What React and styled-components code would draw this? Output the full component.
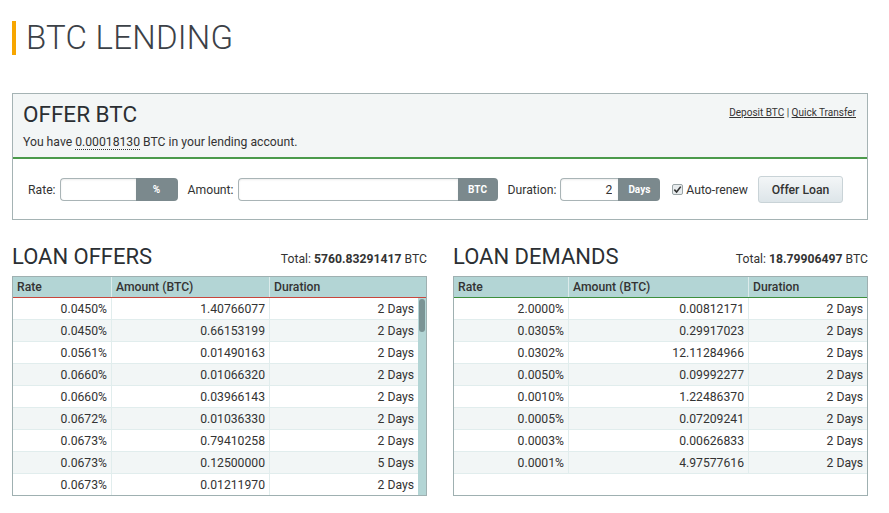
import styled, { createGlobalStyle } from 'styled-components';

const GlobalStyle = createGlobalStyle`
  body {
    margin: 0;
    background: #fff;
    font-family: Roboto, "Liberation Sans", Arial, sans-serif;
    color: #333;
  }
`;

const Page = styled.div`
  width: 889px;
  padding: 21px 21px 0 12px;
  box-sizing: border-box;
`;

const PageTitle = styled.h1`
  margin: 0 0 38px;
  height: 34px;
  line-height: 34px;
  border-left: 4px solid #f7a600;
  padding-left: 10px;
  font-size: 33px;
  font-weight: 300;
  color: #3c4147;
  letter-spacing: 0.25px;
`;

const OfferBox = styled.div`
  border: 1px solid #a5b3b4;
  width: 856px;
  box-sizing: border-box;
`;

const OfferHead = styled.div`
  background: #f3f6f6;
  border-bottom: 2px solid #4b9a4b;
  padding: 7px 11px 7px 10px;
  display: flex;
  justify-content: space-between;
  align-items: flex-start;
`;

const BoxTitle = styled.h2`
  margin: 0 0 7px;
  font-size: 22.5px;
  line-height: 26px;
  font-weight: 400;
  color: #2b2f33;
`;

const Note = styled.div`
  font-size: 12.2px;
  line-height: 16px;
  color: #333;
`;

const Dotted = styled.span`
  border-bottom: 1px dotted #333;
`;

const Links = styled.div`
  font-size: 10px;
  margin-top: 6px;
  color: #333;
  a {
    color: #333;
    text-decoration: underline;
  }
`;

const FormRow = styled.div`
  display: flex;
  align-items: center;
  padding: 17px 15px 16px 15px;
  font-size: 12.2px;
`;

const Label = styled.label`
  margin-right: 4px;
  color: #333;
`;

const Group = styled.div`
  display: flex;
  height: 23px;
  margin-right: ${(p) => p.$gap}px;
`;

const Input = styled.input`
  width: ${(p) => p.$w}px;
  box-sizing: border-box;
  border: 1px solid #a9b4b6;
  border-right: none;
  border-radius: 4px 0 0 4px;
  padding: 0 6px;
  font: 12.2px Roboto, sans-serif;
  color: #333;
  text-align: right;
  outline: none;
  box-shadow: inset 0 1px 2px rgba(0, 0, 0, 0.08);
`;

const Addon = styled.span`
  width: ${(p) => p.$w}px;
  background: #7b898d;
  color: #fff;
  font-size: 10px;
  font-weight: 700;
  border-radius: 0 4px 4px 0;
  display: flex;
  align-items: center;
  justify-content: center;
`;

const Check = styled.span`
  width: 11px;
  height: 11px;
  border: 1px solid #9aa4a6;
  border-radius: 2px;
  background: #e8ecee;
  box-sizing: border-box;
  margin: 0 3px 0 0;
  display: flex;
  align-items: center;
  justify-content: center;
`;

const CheckLabel = styled.span`
  margin-right: 10px;
`;

const Button = styled.button`
  width: 85px;
  height: 27px;
  border: 1px solid #c9d3d7;
  border-radius: 3px;
  background: linear-gradient(#f3f6f7, #dde5e9);
  font: 500 12.2px Roboto, sans-serif;
  color: #333;
`;

const Columns = styled.div`
  display: grid;
  grid-template-columns: 415px 415px;
  column-gap: 26px;
  margin-top: 20px;
`;

const SectionHead = styled.div`
  display: flex;
  justify-content: space-between;
  align-items: flex-end;
  height: 30px;
  margin-bottom: 6px;
`;

const SectionTitle = styled.h3`
  margin: 0;
  font-size: 22px;
  line-height: 26px;
  font-weight: 400;
  color: #2b2f33;
`;

const Total = styled.div`
  font-size: 12.2px;
  margin-bottom: 4px;
  b {
    font-weight: 700;
  }
`;

const TableWrap = styled.div`
  border: 1px solid #9fb0b1;
  height: 220px;
  box-sizing: border-box;
  overflow: hidden;
`;

const HeadRow = styled.div`
  display: grid;
  grid-template-columns: ${(p) => p.$cols};
  background: #b3d5d5;
  border-bottom: 1px solid ${(p) => p.$accent};
  height: 20px;
`;

const HeadCell = styled.div`
  font-size: 12.2px;
  font-weight: 500;
  color: #333;
  line-height: 20px;
  padding-left: 4px;
  border-left: 1px solid #dcebeb;
  &:first-child {
    border-left: none;
  }
`;

const BodyArea = styled.div`
  display: flex;
`;

const Rows = styled.div`
  flex: 1;
`;

const Row = styled.div`
  display: grid;
  grid-template-columns: ${(p) => p.$cols};
  height: 22px;
  box-sizing: border-box;
  background: ${(p) => (p.$alt ? '#f2f6f6' : '#fff')};
  border-bottom: 1px solid #e1eded;
`;

const Cell = styled.div`
  font-size: 12.2px;
  line-height: 21px;
  padding-top: 1px;
  text-align: right;
  padding-right: 4px;
  color: #333;
  border-left: 1px solid #e1eded;
  &:first-child {
    border-left: none;
  }
`;

const Track = styled.div`
  width: 8px;
  background: #b3d5d5;
  padding-top: 1px;
`;

const Thumb = styled.div`
  width: 6px;
  margin-left: 1px;
  height: 33px;
  border-radius: 3px;
  background: #7b9495;
`;

const offers = [
  ['0.0450%', '1.40766077', '2 Days'],
  ['0.0450%', '0.66153199', '2 Days'],
  ['0.0561%', '0.01490163', '2 Days'],
  ['0.0660%', '0.01066320', '2 Days'],
  ['0.0660%', '0.03966143', '2 Days'],
  ['0.0672%', '0.01036330', '2 Days'],
  ['0.0673%', '0.79410258', '2 Days'],
  ['0.0673%', '0.12500000', '5 Days'],
  ['0.0673%', '0.01211970', '2 Days'],
];

const demands = [
  ['2.0000%', '0.00812171', '2 Days'],
  ['0.0305%', '0.29917023', '2 Days'],
  ['0.0302%', '12.11284966', '2 Days'],
  ['0.0050%', '0.09992277', '2 Days'],
  ['0.0010%', '1.22486370', '2 Days'],
  ['0.0005%', '0.07209241', '2 Days'],
  ['0.0003%', '0.00626833', '2 Days'],
  ['0.0001%', '4.97577616', '2 Days'],
];

const OrderTable = ({ title, total, rows, cols, accent, scroll }) => (
  <div>
    <SectionHead>
      <SectionTitle>{title}</SectionTitle>
      <Total>
        Total: <b>{total}</b> BTC
      </Total>
    </SectionHead>
    <TableWrap>
      <HeadRow $cols={cols} $accent={accent}>
        <HeadCell>Rate</HeadCell>
        <HeadCell>Amount (BTC)</HeadCell>
        <HeadCell>Duration</HeadCell>
      </HeadRow>
      <BodyArea>
        <Rows>
          {rows.map((r, i) => (
            <Row key={i} $cols={cols} $alt={i % 2 === 1}>
              {r.map((c, j) => (
                <Cell key={j}>{c}</Cell>
              ))}
            </Row>
          ))}
        </Rows>
        {scroll && (
          <Track>
            <Thumb />
          </Track>
        )}
      </BodyArea>
    </TableWrap>
  </div>
);

export default function App() {
  return (
    <Page>
      <GlobalStyle />
      <PageTitle>BTC LENDING</PageTitle>
      <OfferBox>
        <OfferHead>
          <div>
            <BoxTitle>OFFER BTC</BoxTitle>
            <Note>
              You have <Dotted>0.00018130</Dotted> BTC in your lending account.
            </Note>
          </div>
          <Links>
            <a>Deposit BTC</a> | <a>Quick Transfer</a>
          </Links>
        </OfferHead>
        <FormRow>
          <Label>Rate:</Label>
          <Group $gap={10}>
            <Input $w={76} />
            <Addon $w={42}>%</Addon>
          </Group>
          <Label>Amount:</Label>
          <Group $gap={10}>
            <Input $w={220} />
            <Addon $w={40}>BTC</Addon>
          </Group>
          <Label>Duration:</Label>
          <Group $gap={12}>
            <Input $w={58} defaultValue="2" />
            <Addon $w={42}>Days</Addon>
          </Group>
          <Check>
            <svg width="9" height="9" viewBox="0 0 10 10">
              <path d="M1.5 5.2 L4 7.8 L8.6 1.8" fill="none" stroke="#333" strokeWidth="1.8" />
            </svg>
          </Check>
          <CheckLabel>Auto-renew</CheckLabel>
          <Button>Offer Loan</Button>
        </FormRow>
      </OfferBox>
      <Columns>
        <OrderTable
          title="LOAN OFFERS"
          total="5760.83291417"
          rows={offers}
          cols="98px 158px 1fr"
          accent="#c8463c"
          scroll
        />
        <OrderTable
          title="LOAN DEMANDS"
          total="18.79906497"
          rows={demands}
          cols="114px 180px 1fr"
          accent="#3d8f3d"
        />
      </Columns>
    </Page>
  );
}
